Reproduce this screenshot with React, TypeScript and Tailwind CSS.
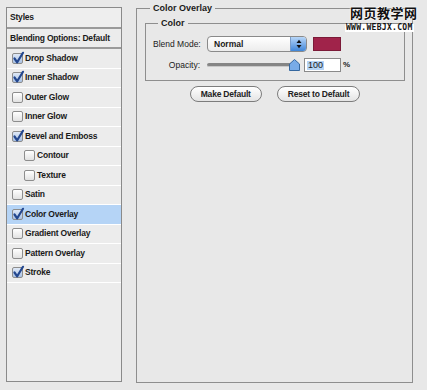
import type { ReactNode } from 'react'

const styles = [
  { label: 'Drop Shadow', checked: true },
  { label: 'Inner Shadow', checked: true },
  { label: 'Outer Glow', checked: false },
  { label: 'Inner Glow', checked: false },
  { label: 'Bevel and Emboss', checked: true },
  { label: 'Contour', checked: false, indent: true },
  { label: 'Texture', checked: false, indent: true },
  { label: 'Satin', checked: false },
  { label: 'Color Overlay', checked: true, active: true },
  { label: 'Gradient Overlay', checked: false },
  { label: 'Pattern Overlay', checked: false },
  { label: 'Stroke', checked: true },
]

function Checkbox({ checked }: { checked: boolean }) {
  return (
    <span
      className={[
        'relative w-[11px] h-[11px] shrink-0 rounded-[2px] border border-[#8d8d8d] bg-gradient-to-b',
        checked ? 'from-[#dfe9f7] to-[#a9c1e3]' : 'from-white to-[#e2e2e2]',
      ].join(' ')}
    >
      {checked && (
        <svg className="absolute -top-[3px] -left-[1px]" width="13" height="14" viewBox="0 0 13 14">
          <path d="M2.5 7.5 L5.2 11.3 L11 1.8" fill="none" stroke="#23478f" strokeWidth="2.2" strokeLinecap="round" strokeLinejoin="round" />
        </svg>
      )}
    </span>
  )
}

function Button({ children }: { children: ReactNode }) {
  return (
    <button className="h-[16px] px-[10px] rounded-full border border-[#7c7c7c] bg-gradient-to-b from-white to-[#e4e4e4] text-[8.5px] font-bold tracking-[-0.2px] text-[#222] leading-none">
      {children}
    </button>
  )
}

export default function App() {
  return (
    <div className="relative w-[427px] h-[390px] bg-[#e8e8e8] font-['Liberation_Sans',Arial,sans-serif] text-[#1a1a1a] flex gap-[14px] pl-[6px] pt-[7px]">
      {/* Styles list */}
      <div className="w-[116px] h-[375px] border border-[#8a8a8a] bg-[#ececec] flex flex-col">
        <div className="h-[21px] border-b-2 border-[#9a9a9a] bg-[#eeeeee] flex items-center pl-[3px] text-[8.5px] font-bold tracking-[-0.2px]">
          Styles
        </div>
        <div className="h-[20px] border-b-2 border-[#9a9a9a] flex items-center pl-[3px] text-[8.5px] font-bold tracking-[-0.2px]">
          Blending Options: Default
        </div>
        {styles.map((s) => (
          <div
            key={s.label}
            className={[
              'h-[19.5px] flex items-center gap-[2px] border-b border-white text-[8.5px] font-bold tracking-[-0.2px]',
              s.indent ? 'pl-[17px]' : 'pl-[5px]',
              s.active ? 'bg-[#b5d4f6]' : '',
            ].join(' ')}
          >
            <Checkbox checked={s.checked} />
            <span>{s.label}</span>
          </div>
        ))}
      </div>

      {/* Color Overlay panel */}
      <fieldset className="w-[277px] h-[379px] border border-[#8e8e8e] pl-[8px] pr-[7px] -mt-[3px]">
        <legend className="ml-[5px] px-[3px] text-[9px] font-bold leading-none">Color Overlay</legend>
        <fieldset className="mt-[6px] h-[62px] border border-[#8e8e8e] pl-[7px] pr-[8px]">
          <legend className="ml-[5px] px-[3px] text-[9px] font-bold leading-none">Color</legend>
          <div className="flex items-center mt-[8px] h-[16px]">
            <span className="w-[47px] text-right text-[8.5px] whitespace-nowrap">Blend Mode:</span>
            <div className="ml-[7px] w-[100px] h-[16px] rounded-[4px] border border-[#8a8a8a] bg-gradient-to-b from-white to-[#ececec] flex items-center">
              <span className="flex-1 pl-[6px] text-[8.5px] font-bold">Normal</span>
              <span className="w-[16px] h-[14px] rounded-r-[3px] border-l border-[#7a9cc8] bg-gradient-to-b from-[#b7d6f8] to-[#3f86d8] flex items-center justify-center">
                <svg width="6" height="10" viewBox="0 0 6 10">
                  <path d="M0.5 4 L3 0.8 L5.5 4 Z M0.5 6 L3 9.2 L5.5 6 Z" fill="#111" />
                </svg>
              </span>
            </div>
            <div className="ml-[6px] w-[28px] h-[14px] bg-[#a0234a] border border-[#7b1a38]" />
          </div>
          <div className="flex items-center mt-[6px] h-[14px]">
            <span className="w-[47px] text-right text-[8.5px]">Opacity:</span>
            <div className="relative ml-[7px] w-[88px] h-[14px] flex items-center">
              <div className="w-full h-[4px] rounded-full bg-[#858585] border-b border-[#c8c8c8]" />
              <svg className="absolute right-[-5px] top-[1px]" width="11" height="12" viewBox="0 0 11 12">
                <path d="M5.5 0.5 L10.5 5 L10.5 11.5 L0.5 11.5 L0.5 5 Z" fill="#78abe8" stroke="#35679f" />
              </svg>
            </div>
            <div className="ml-[9px] w-[37px] h-[14px] border border-[#8a8a8a] bg-white flex items-center pl-[2px]">
              <span className="bg-[#b5d4f6] text-[9px] leading-none px-[1px]">100</span>
            </div>
            <span className="ml-[2px] text-[8px] font-bold">%</span>
          </div>
        </fieldset>
        <div className="flex justify-center gap-[15px] mt-[5px]">
          <Button>Make Default</Button>
          <Button>Reset to Default</Button>
        </div>
      </fieldset>

      {/* watermark */}
      <span className="absolute left-[350px] top-[6px] text-[13px] leading-none font-bold text-[#111] tracking-[0.5px] font-['Noto_Sans_CJK_SC',sans-serif] [text-shadow:0_0_2px_#fff,0_0_2px_#fff]">
        网页教学网
      </span>
      <span className="absolute left-[345px] top-[24px] text-[8px] leading-none font-bold text-[#111] tracking-[0.3px] font-['DejaVu_Sans_Mono',monospace] bg-white px-[1px]">
        WWW.WEBJX.COM
      </span>
    </div>
  )
}
